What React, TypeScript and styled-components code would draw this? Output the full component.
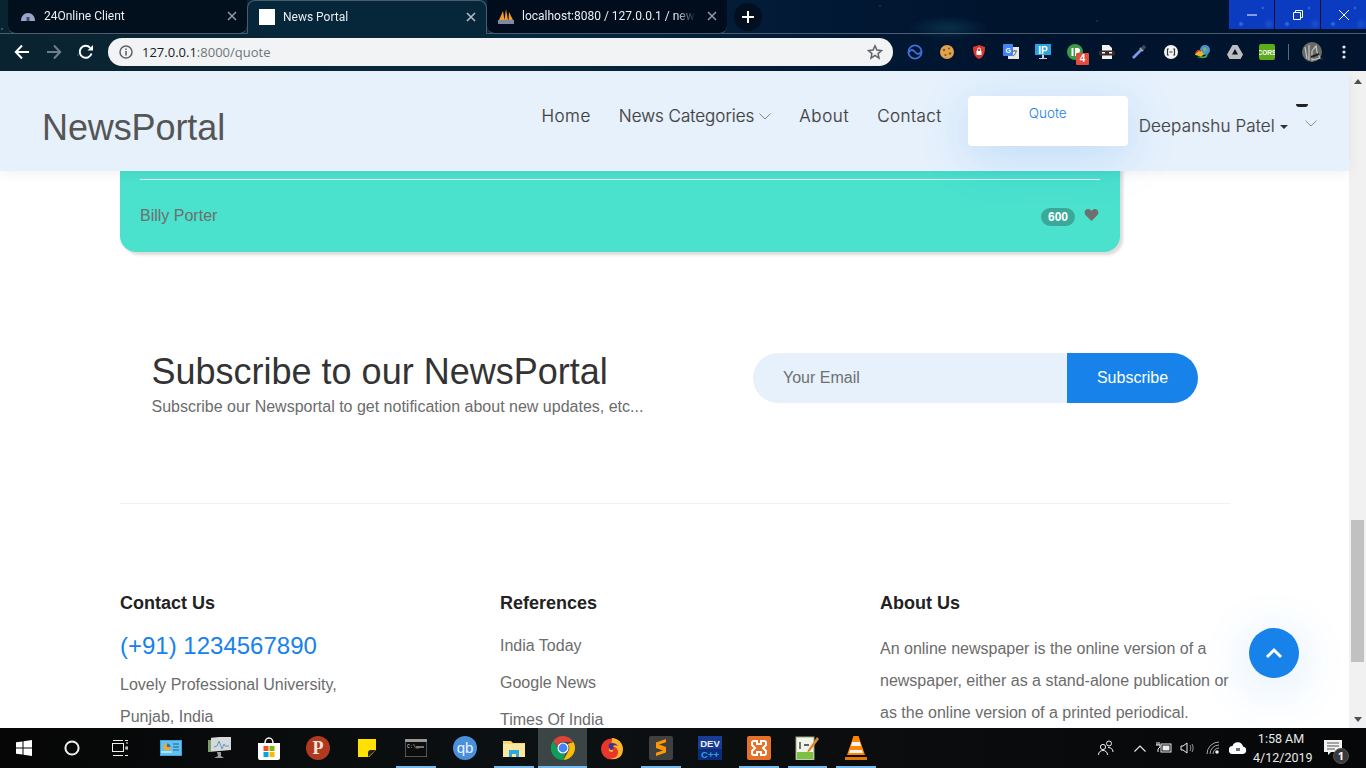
import React from "react";
import styled, { createGlobalStyle } from "styled-components";

const Global = createGlobalStyle`
  html, body { margin: 0; padding: 0; height: 100%; overflow: hidden; background: #fff; }
  * { box-sizing: border-box; }
`;

const Screen = styled.div`
  width: 1366px; height: 768px; display: flex; flex-direction: column; overflow: hidden;
  font-family: "Liberation Sans", Arial, sans-serif;
`;

/* ---------- browser chrome ---------- */
const Browser = styled.header`
  height: 71px; flex: none; display: flex; flex-direction: column; color: #fff;
  font-family: Roboto, "Noto Sans", sans-serif;
  background:
    radial-gradient(circle 1.5px at 78px 55px, #3b6a80 0, transparent 100%),
    radial-gradient(circle 1.5px at 2px 29px, #5b7f90 0, transparent 100%),
    radial-gradient(circle 1.5px at 1097px 21px, #1d3b5c 0, transparent 100%),
    radial-gradient(circle 1.5px at 1322px 59px, #1f3f60 0, transparent 100%),
    radial-gradient(circle 1.5px at 880px 6px, #203f5e 0, transparent 100%),
    radial-gradient(ellipse 40px 12px at 948px 28px, #0a3048 0, transparent 100%),
    radial-gradient(ellipse 260px 40px at 500px 50px, #05283e 0, transparent 100%),
    linear-gradient(90deg, #0a2330 0%, #08273a 35%, #021a36 58%, #00142e 72%, #00142e 100%);
`;
const TabStrip = styled.div`
  height: 34px; flex: none; display: flex; align-items: flex-start; padding-left: 8px;
  border-bottom: 1px solid #4a5d70;
`;
const Tab = styled.div<{ $active?: boolean }>`
  width: 239px; height: 34px; display: flex; align-items: center; gap: 8px; padding: 0 7px 1px 12px;
  font-size: 12px; position: relative;
  background: ${(p) => (p.$active ? "#06263a" : "#020f1d")};
  border-radius: ${(p) => (p.$active ? "8px 8px 0 0" : "0 0 8px 8px")};
  ${(p) =>
    p.$active
      ? "width: 240px; padding-left: 11px; border: 1px solid #4a5d70; border-bottom: 1px solid #06263a; z-index: 1;"
      : "border-bottom: 1px solid #4a5d70;"}
`;
const TabLast = styled(Tab)`
  width: 240px; background: #010c1c; border-left: 0; padding-left: 11px;
`;
const TabTitle = styled.span`
  flex: 1; min-width: 0; white-space: nowrap; overflow: hidden; color: #e9eef2;
  -webkit-mask-image: linear-gradient(90deg, #000 88%, transparent 100%);
  mask-image: linear-gradient(90deg, #000 88%, transparent 100%);
`;
const TabClose = styled.span`
  width: 16px; height: 16px; display: grid; place-items: center; flex: none; color: #8c98a3;
`;
const NewTab = styled.div`
  width: 28px; height: 28px; border-radius: 50%; background: #020f20; display: grid; place-items: center;
  margin: 3px 0 0 7px;
`;
const StripFill = styled.div`flex: 1;`;
const WinButtons = styled.div`
  display: flex; gap: 1px; height: 29px; margin-left: auto;
`;
const WinButton = styled.div`
  width: 45px; height: 29px; display: grid; place-items: center;
  background:
    radial-gradient(circle 3px at 12px 24px, #3f78e0 0, transparent 100%),
    radial-gradient(circle 2px at 34px 8px, #3a70de 0, transparent 100%),
    radial-gradient(circle 6px at 40px 24px, #1b52cc 0, transparent 100%),
    #0a3bc0;
`;
const Toolbar = styled.div`
  height: 37px; flex: none; display: flex; align-items: center; padding: 0 0 2px 6px;
`;
const NavIcon = styled.span`
  width: 32px; height: 28px; display: grid; place-items: center; flex: none;
`;
const AddressBar = styled.div`
  width: 785px; height: 28px; border-radius: 14px; background: #f1f3f4; margin-left: 6px;
  display: flex; align-items: center; padding: 0 10px 0 11px; gap: 9px;
  font-family: "Open Sans", sans-serif; font-size: 13px; color: #70757a;
`;
const Host = styled.span`color: #202124;`;
const Url = styled.span`flex: 1; white-space: nowrap;`;
const Extensions = styled.div`
  display: flex; align-items: center; margin-left: 6px;
`;
const Ext = styled.span`
  width: 32px; height: 28px; display: grid; place-items: center; flex: none; position: relative;
`;
const ExtBadge = styled.span`
  position: absolute; left: 17px; top: 15px; width: 13px; height: 12px; background: #e64a3c; color: #fff;
  font: bold 10px/12px "Liberation Sans", sans-serif; text-align: center; border-radius: 1px;
`;
const ExtSep = styled.span`
  width: 1px; height: 16px; background: #5c6b7a; margin: 0 7px 0 5px;
`;

/* ---------- page ---------- */
const Viewport = styled.div`
  position: relative; height: 657px; flex: none; display: flex; overflow: hidden; background: #fff;
`;
const Page = styled.main`
  width: 1349px; flex: none; overflow: hidden;
`;
const Scrollbar = styled.div`
  width: 17px; flex: none; background: #f1f1f1; display: flex; flex-direction: column; align-items: center;
`;
const ScrollArrowUp = styled.span`
  width: 0; height: 0; margin-top: 8px; border: 4px solid transparent; border-top: 0; border-bottom: 5px solid #505050;
`;
const ScrollThumb = styled.span`
  width: 13px; height: 142px; background: #c1c1c1; margin-top: 436px;
`;
const ScrollArrowDown = styled.span`
  width: 0; height: 0; margin-top: 55px; border: 4px solid transparent; border-bottom: 0; border-top: 5px solid #505050;
`;

const NavBar = styled.nav`
  position: absolute; left: 0; top: 0; width: 1349px; height: 100px; background: #e6f1fc; z-index: 2;
  box-shadow: 0 2px 12px rgba(0, 0, 0, 0.06);
  display: flex; align-items: flex-start; padding-left: 42px;
  font-family: Inter, "Liberation Sans", sans-serif; color: #515151;
`;
const Logo = styled.div`
  font: 36px/42px "Liberation Sans", sans-serif; color: #555; margin-top: 36px; letter-spacing: -0.1px;
`;
const NavLinks = styled.div`
  margin-left: auto; display: flex; align-items: flex-start;
`;
const NavLink = styled.a<{ $track?: number; $end?: number }>`
  font-size: 17px; line-height: 22px; font-weight: 300; margin: 34px ${(p) => p.$end ?? 28}px 0 0; display: flex; align-items: center; gap: 5px;
  color: #3f3f3f; white-space: nowrap; -webkit-text-stroke: 0.2px #3f3f3f;
  letter-spacing: ${(p) => p.$track ?? 0}px;
`;
const QuoteButton = styled.a`
  width: 160px; height: 50px; background: #fff; border-radius: 4px; margin-top: 25px;
  color: #1782ea; font-size: 13.5px; line-height: 34px; text-align: center; font-weight: 300;
  box-shadow: 0 10px 50px rgba(23, 130, 234, 0.2);
`;
const UserMenu = styled.div`
  margin: 44px 0 0 11px; font-size: 17px; line-height: 22px; color: #444; font-weight: 300; display: flex; align-items: center; gap: 5px;
  white-space: nowrap; -webkit-text-stroke: 0.2px #444; letter-spacing: 0.15px;
`;
const Caret = styled.span`
  width: 0; height: 0; border: 4px solid transparent; border-bottom: 0; border-top: 4px solid #333; margin-top: 2px;
`;
const UserExtra = styled.div`
  width: 59px; display: flex; flex-direction: column; align-items: flex-start; margin-top: 33px; margin-left: 2px; gap: 13px;
`;
const WideCaret = styled.span`
  width: 12px; height: 3px; background: #222; border-radius: 0 0 6px 6px; margin-left: 6px;
`;
const ExtraChevron = styled.span`
  display: flex; margin-left: 15px;
`;

const Card = styled.section`
  width: 1000px; height: 181px; margin-left: 120px; background: #4ae1cd; border-radius: 0 0 16px 16px;
  box-shadow: 3px 3px 3px rgba(0, 0, 0, 0.14); padding: 108px 20px 0;
`;
const CardFooter = styled.div`
  border-top: 1px solid #e8fbf8; display: flex; align-items: center; padding-top: 26px; line-height: 18px;
`;
const Author = styled.span`
  font-size: 16px; color: #6f6f6f; flex: 1;
`;
const Badge = styled.span`
  width: 34px; height: 18px; border-radius: 9px; background: #3aa999; color: #fff; text-align: center;
  font: bold 12px/18px "Liberation Sans", sans-serif; margin: 2px 9px 0 0;
`;
const Heart = styled.svg`
  margin: -3px 1px 0 0;
`;

const Subscribe = styled.section`
  display: flex; justify-content: space-between; align-items: flex-start; margin-top: 101px; padding: 0 151px 0 151.5px; height: 150px;
`;
const SubTitle = styled.h2`
  margin: 0; font-size: 36px; line-height: 38px; font-weight: 400; color: #333;
`;
const SubText = styled.p`
  margin: 7px 0 0; font-size: 16px; line-height: 18px; color: #6c6c6c;
`;
const SubForm = styled.div`
  width: 445px; height: 50px; display: flex; border-radius: 25px; overflow: hidden; font-size: 16px;
`;
const EmailBox = styled.div`
  flex: 1; background: #e6f1fc; color: #6f6f6f; line-height: 50px; padding-left: 30px;
`;
const SubButton = styled.div`
  width: 131px; background: #1782ea; color: #fff; line-height: 50px; text-align: center;
`;
const Rule = styled.hr`
  width: 1110px; margin: 0 0 0 120px; border: 0; border-top: 1px solid #eef1f3;
`;
const FooterGrid = styled.footer`
  display: grid; grid-template-columns: 380px 380px 350px; padding: 88px 0 0 120px;
`;
const FooterCol = styled.div``;
const FootTitle = styled.h4`
  margin: 0; font-size: 18px; line-height: 22px; font-weight: 700; color: #222;
`;
const Phone = styled.div`
  font-size: 24px; line-height: 30px; color: #1782ea; margin-top: 17px;
`;
const Addr = styled.div`
  font-size: 16px; line-height: 32px; color: #6c6c6c; margin-top: 8px;
`;
const Links = styled.div`
  margin-top: 23px; display: flex; flex-direction: column; gap: 19px;
  font-size: 16px; line-height: 18px; color: #6c6c6c;
`;
const About = styled.p`
  margin: 19px 0 0; font-size: 16px; line-height: 32px; color: #6c6c6c;
`;
const BackTop = styled.div`
  position: absolute; left: 1249px; top: 557px; width: 50px; height: 50px; border-radius: 50%; background: #1782ea;
  display: grid; place-items: center; z-index: 3; box-shadow: 0 8px 50px rgba(23, 130, 234, 0.2);
`;

/* ---------- taskbar ---------- */
const Taskbar = styled.footer`
  height: 40px; flex: none; background: linear-gradient(90deg, #060606, #0c1113 40%, #0b0d0e 60%, #060708); display: flex; align-items: stretch; color: #fff; z-index: 4;
`;
const Slot = styled.div<{ $run?: boolean; $hot?: boolean; $shift?: number }>`
  width: 48.95px; flex: none; display: grid; place-items: center; position: relative;
  padding-right: ${(p) => p.$shift ?? 0}px;
  background: ${(p) => (p.$hot ? "#3b4546" : "transparent")};
  &::after {
    content: ""; position: absolute; bottom: 0; left: ${(p) => (p.$hot ? "0" : "4.5px")}; right: ${(p) => (p.$hot ? "0" : "4.5px")}; height: 2px;
    background: ${(p) => (p.$run ? "#76b9ed" : "transparent")};
  }
`;
const Tray = styled.div`
  margin-left: auto; display: flex; align-items: center; padding-right: 18px;
`;
const TrayIcon = styled.span<{ $w?: number }>`
  width: ${(p) => p.$w ?? 24}px; display: grid; place-items: center; flex: none;
`;
const Clock = styled.div`
  width: 56px; text-align: center; font: 12.5px/19px Roboto, "Noto Sans", sans-serif; color: #e8e8e8; margin: 0 9px 0 3px; white-space: nowrap;
`;
const Notify = styled.span`
  position: relative; width: 30px; height: 30px; display: grid; place-items: center;
`;
const NotifyBadge = styled.span`
  position: absolute; left: 15px; top: 15px; width: 16px; height: 16px; border-radius: 50%; background: #3a3a3a; color: #fff;
  font: bold 11px/14px "Noto Sans", sans-serif; text-align: center; border: 1px solid #555;
`;

/* ---------- drawings ---------- */
const X = ({ c = "#8c98a3" }: { c?: string }) => (
  <svg width="10" height="10" viewBox="0 0 10 10"><path d="M1 1l8 8M9 1l-8 8" stroke={c} strokeWidth="1.6" /></svg>
);
const Chev = ({ c = "#666" }: { c?: string }) => (
  <svg width="12" height="7" viewBox="0 0 12 7"><path d="M.5.7L6 6l5.500-5.300" fill="none" stroke={c} strokeWidth=".8" /></svg>
);
const IconSet = {
  back: <svg width="16" height="16" viewBox="0 0 16 16"><path d="M15 8H2M8 1.500L1.800 8 8 14.500" fill="none" stroke="#fff" strokeWidth="2" /></svg>,
  fwd: <svg width="16" height="16" viewBox="0 0 16 16"><path d="M1 8h13M8 1.500L14.200 8 8 14.500" fill="none" stroke="#717f8a" strokeWidth="2" /></svg>,
  reload: <svg width="16" height="16" viewBox="0 0 16 16"><path d="M13.500 9.500A6 6 0 1 1 12.200 3.800" fill="none" stroke="#fff" strokeWidth="2" /><path d="M9.500 6.500H15V1z" fill="#fff" /></svg>,
  info: <svg width="14" height="14" viewBox="0 0 14 14"><circle cx="7" cy="7" r="6" fill="none" stroke="#5f6368" strokeWidth="1.500" /><path d="M7 6v4.400M7 3.400v1.600" stroke="#5f6368" strokeWidth="1.600" /></svg>,
  star: <svg width="16" height="16" viewBox="0 0 16 16"><path d="M8 1.800l1.900 4.200 4.600.5-3.400 3.100.9 4.500L8 11.400l-4 2.700.9-4.500L1.500 6.500l4.600-.5z" fill="none" stroke="#5f6368" strokeWidth="1.500" /></svg>,
};

const Exts = [
  <svg width="16" height="16" viewBox="0 0 16 16"><circle cx="8" cy="8" r="6.600" fill="none" stroke="#3f6fd8" strokeWidth="1.800" /><path d="M1.500 8.500C4 5 6 5.500 8 8s4 3 6.500-.5" fill="none" stroke="#3f6fd8" strokeWidth="1.800" /></svg>,
  <svg width="16" height="16" viewBox="0 0 16 16"><circle cx="8" cy="8" r="7" fill="#e2a24e" /><circle cx="5" cy="6" r="1.200" fill="#8a5420" /><circle cx="10" cy="4.600" r="1" fill="#8a5420" /><circle cx="11" cy="9.500" r="1.200" fill="#8a5420" /><circle cx="6.500" cy="11" r="1.100" fill="#8a5420" /></svg>,
  <svg width="16" height="16" viewBox="0 0 16 16"><path d="M8 1l6 2c0 6-1.500 10-6 12C3.500 13 2 9 2 3z" fill="#d9382e" /><rect x="5.500" y="7" width="5" height="4" fill="#fff" /><path d="M6.500 7V5.500a1.500 1.500 0 0 1 3 0V7" fill="none" stroke="#fff" /></svg>,
  <svg width="16" height="16" viewBox="0 0 16 16"><rect x="5" y="3" width="11" height="12" fill="#e8e8e8" /><rect width="10" height="12" rx="1" fill="#4285f4" /><text x="2.500" y="8.500" fontSize="7" fontWeight="700" fill="#fff" fontFamily="Liberation Sans">G</text><path d="M9 7h5M11.500 6v1M10 12c2-1 3-3 3-5" stroke="#666" fill="none" /></svg>,
  <svg width="18" height="18" viewBox="0 0 18 18"><rect x="1" y="1" width="16" height="11" fill="#29a3e6" /><text x="9" y="10.500" fontSize="10" fontWeight="700" fill="#fff" textAnchor="middle" fontFamily="Liberation Sans">IP</text><path d="M8 12h2v3h3v1H5v-1h3z" fill="#cfd6da" /></svg>,
  <svg width="16" height="16" viewBox="0 0 16 16"><circle cx="8" cy="8" r="8" fill="#3d9a46" /><rect x="4.500" y="4" width="2" height="8" fill="#fff" /><path d="M8 4h2.500a2.500 2.500 0 0 1 0 5H9.500v3H8z" fill="#fff" /></svg>,
  <svg width="16" height="16" viewBox="0 0 16 16"><path d="M3 1h7l3 3v3H3zM3 11h10v4H3z" fill="#f2f2f2" /><rect y="6.500" width="16" height="5" rx="1.500" fill="#3a2a28" /><rect x="3" y="8" width="3" height="1.500" fill="#fff" /><rect x="10" y="8" width="3" height="1.500" fill="#fff" /></svg>,
  <svg width="16" height="16" viewBox="0 0 16 16"><path d="M2 14l8-8" stroke="#7b9be8" strokeWidth="2.600" /><path d="M9 4l3 3" stroke="#aab" strokeWidth="2" /><path d="M11 5l3-3" stroke="#3d4a55" strokeWidth="3.500" /></svg>,
  <svg width="16" height="16" viewBox="0 0 16 16"><circle cx="8" cy="8" r="7" fill="#f4f4f4" /><path d="M5.800 5H4.500v6h1.300M10.200 5h1.300v6h-1.300M6.500 8h3" fill="none" stroke="#333" strokeWidth="1.200" /></svg>,
  <svg width="18" height="16" viewBox="0 0 18 16"><circle cx="11" cy="6" r="5" fill="#4f8fd0" /><path d="M9 4c2-1 3 0 4 2l-3 2z" fill="#6fbf4a" /><path d="M1 11C2 6 6 5 8 8l2 2-3 3c-2-1-4-2-6-2z" fill="#e9b820" /><path d="M3 13c3-1 6 0 8-1l3-3-1 4c-3 2-7 1-10 0z" fill="#3fae4a" /><path d="M2 9c1-2 3-3 5-2" stroke="#d33" fill="none" strokeWidth="1.500" /></svg>,
  <svg width="16" height="14" viewBox="0 0 16 14"><path d="M5.500 0h5L16 9.500 13.500 14h-11L0 9.500z" fill="#bdbdbd" /><path d="M8 4L5 9.500h6z" fill="#00142e" /></svg>,
  <svg width="16" height="16" viewBox="0 0 16 16"><rect width="16" height="16" rx="2" fill="#5cab1a" /><text x="8" y="10.500" fontSize="6.500" fontWeight="700" fill="#fff" textAnchor="middle" fontFamily="Liberation Sans Narrow, Liberation Sans">CORS</text></svg>,
];

const Avatar = (
  <svg width="20" height="20" viewBox="0 0 20 20"><circle cx="10" cy="10" r="10" fill="#6a6a68" /><path d="M3 5l2 12M7 3v15M10 9l4-5 1 6 3 6-8 2z" stroke="#c8c8c4" fill="none" strokeWidth="1.200" /><path d="M9 15l8-3" stroke="#222" strokeWidth="2" /></svg>
);
const Dots = (
  <svg width="4" height="14" viewBox="0 0 4 14"><circle cx="2" cy="2" r="1.600" fill="#e8e8e8" /><circle cx="2" cy="7" r="1.600" fill="#e8e8e8" /><circle cx="2" cy="12" r="1.600" fill="#e8e8e8" /></svg>
);

const Bar = [
  { shift: 0, run: false, hot: false, el: <svg width="16" height="16" viewBox="0 0 16 16"><path d="M0 2.300L6.500 1.400V7.500H0zM7.500 1.300L16 0v7.500H7.500zM0 8.500h6.500v6.100L0 13.700zM7.500 8.500H16V16l-8.500-1.300z" fill="#fff" /></svg> },
  { shift: 2, run: false, hot: false, el: <svg width="16" height="16" viewBox="0 0 16 16"><circle cx="8" cy="8" r="6.600" fill="none" stroke="#f0f0f0" strokeWidth="2" /></svg> },
  { shift: 4, run: false, hot: false, el: <svg width="16" height="16" viewBox="0 0 16 16"><path d="M1 .5h10M1 15.500h10" stroke="#eee" /><rect x=".5" y="3.500" width="11" height="8" fill="none" stroke="#eee" /><path d="M13 .5h3M14 3h2M14 7h2v2h-2zM13 15.500h3" stroke="#eee" strokeWidth="1.200" /></svg> },
  { shift: 0, run: false, hot: false, el: <svg width="22" height="16" viewBox="0 0 22 16"><rect width="22" height="16" fill="#35a7e0" /><rect x="1" y="1" width="20" height="14" fill="#66c1ec" /><circle cx="7" cy="7" r="3.500" fill="#f4a62a" /><path d="M7 7V3.500A3.500 3.500 0 0 1 10.500 7z" fill="#2b72c2" /><path d="M13 4h6M13 7h6M13 10h6" stroke="#1b5fa8" /><path d="M1 12h11" stroke="#fff" /></svg> },
  { shift: 0, run: false, hot: false, el: <svg width="24" height="22" viewBox="0 0 24 22"><rect x="3" y="1" width="20" height="14" fill="#d7d9d8" transform="skewY(-5)" /><path d="M6 10l3-1 2-5 3 8 2-5 1 2h4" fill="none" stroke="#5b9bd4" /><path d="M9 15l1 4-4 2h10l-3-2v-4z" fill="#9a9c9b" /><rect x="0" y="3" width="3" height="12" fill="#7e9c6a" /></svg> },
  { shift: 0, run: false, hot: false, el: <svg width="24" height="24" viewBox="0 0 24 24"><path d="M8 7a4 5 0 0 1 8 0" fill="none" stroke="#fff" strokeWidth="1.500" /><path d="M1 7h22v15a2 2 0 0 1-2 2H3a2 2 0 0 1-2-2z" fill="#fff" /><rect x="6.500" y="10" width="5" height="5" fill="#f25022" /><rect x="12.500" y="10" width="5" height="5" fill="#7fba00" /><rect x="6.500" y="16" width="5" height="5" fill="#00a4ef" /><rect x="12.500" y="16" width="5" height="5" fill="#ffb900" /></svg> },
  { shift: 0, run: false, hot: false, el: <svg width="24" height="24" viewBox="0 0 24 24"><circle cx="12" cy="12" r="12" fill="#b0391f" /><text x="12" y="18" fontSize="18" fontWeight="700" fill="#f5e6da" textAnchor="middle" fontFamily="Liberation Serif">P</text></svg> },
  { shift: 0, run: false, hot: false, el: <svg width="18" height="18" viewBox="0 0 18 18"><path d="M0 0h18v11l-7 7H0z" fill="#ffe000" /><path d="M10 18v-4a3 3 0 0 1 3-3h5z" fill="#222" /></svg> },
  { shift: 0, run: true, hot: false, el: <svg width="22" height="18" viewBox="0 0 22 18"><rect width="22" height="18" fill="#0c0c0c" stroke="#9a9a9a" /><rect width="22" height="3" fill="#9a9a9a" /><text x="2" y="9" fontSize="5" fill="#ddd" fontFamily="Liberation Mono">C:\_</text><path d="M11 8h8" stroke="#ddd" /></svg> },
  { shift: 0, run: false, hot: false, el: <svg width="24" height="24" viewBox="0 0 24 24"><circle cx="12" cy="12" r="12" fill="#4a8fdc" /><text x="12" y="17" fontSize="15" fill="#eaf3ff" textAnchor="middle" fontFamily="Liberation Sans">qb</text></svg> },
  { shift: 0, run: true, hot: false, el: <svg width="22" height="18" viewBox="0 0 22 18"><path d="M0 2h8l2 2h12v14H0z" fill="#f7d774" /><rect y="5" width="22" height="13" fill="#fbe79f" /><path d="M6 11h10v7h-3v-3H9v3H6z" fill="#2ea6df" /></svg> },
  { shift: 0, run: true, hot: true, el: <svg width="24" height="24" viewBox="0 0 24 24"><path d="M12 0a12 12 0 0 1 10.400 6H12a6 6 0 0 0-5.800 4.500L2.300 4.800A12 12 0 0 1 12 0z" fill="#db4437" /><path d="M22.400 6A12 12 0 0 1 12.500 24l4.700-8.500A6 6 0 0 0 16.500 8z" fill="#fbbc05" /><path d="M12.500 24A12 12 0 0 1 2.300 4.800l5 8.600A6 6 0 0 0 14.500 17.500z" fill="#0f9d58" /><circle cx="12" cy="12" r="5" fill="#4285f4" stroke="#fff" strokeWidth="1.200" /></svg> },
  { shift: 0, run: false, hot: false, el: <svg width="24" height="24" viewBox="0 0 24 24"><circle cx="11.500" cy="13" r="10.500" fill="#e8362a" /><path d="M12 2c6 0 11 5 11 11 0 3-1 6-3 8-3 2-7 3-10 1 5 1 8-2 8-6 0-3-3-6-6-5 1 2 2 4 0 5-2 0-4-1-3-3 1-3 3-4 3-11z" fill="#fdb22b" /><path d="M9 8c3-2 7-1 9 2-2-1-4-1-5 0 1 1 1 3-1 4-2 0-4-2-3-6z" fill="#46308f" /></svg> },
  { shift: 0, run: true, hot: false, el: <svg width="24" height="24" viewBox="0 0 24 24"><rect width="24" height="24" rx="2" fill="#404040" /><path d="M17 3L7 6.500v5.500l7 2.500-7 2.300V20l10-3.500v-5.500L10 8.500l7-2.300z" fill="#ff9800" /></svg> },
  { shift: 0, run: false, hot: false, el: <svg width="24" height="24" viewBox="0 0 24 24"><rect width="24" height="24" fill="#173d97" /><text x="12" y="11" fontSize="9.500" fontWeight="700" fill="#f0f0f0" textAnchor="middle" fontFamily="Liberation Sans">DEV</text><rect y="13" width="24" height="11" fill="#0b2c78" /><text x="12" y="22" fontSize="9.500" fontWeight="700" fill="#2ea0ea" textAnchor="middle" fontFamily="Liberation Sans">C++</text></svg> },
  { shift: 0, run: true, hot: false, el: <svg width="24" height="24" viewBox="0 0 24 24"><rect width="24" height="24" rx="2" fill="#e4702a" /><path d="M7 5h3v3h4V5h3a2 2 0 0 1 2 2v2l-3 3 3 3v2a2 2 0 0 1-2 2h-3v-3h-4v3H7a2 2 0 0 1-2-2v-2l3-3-3-3V7a2 2 0 0 1 2-2z" fill="none" stroke="#fff" strokeWidth="2" /></svg> },
  { shift: 0, run: true, hot: false, el: <svg width="24" height="24" viewBox="0 0 24 24"><rect x="1" y="1" width="18" height="23" fill="#f1f4e8" stroke="#9aa07f" /><rect x="2" y="16" width="16" height="7" fill="#7cc242" /><path d="M5 6v7M9 9h5" stroke="#333" strokeWidth="1.300" /><path d="M22 1L13 14l-1 3 3-2 9-12z" fill="#d8892b" /></svg> },
  { shift: 0, run: true, hot: false, el: <svg width="22" height="24" viewBox="0 0 22 24"><path d="M8.500 0h5L20 19H2z" fill="#ff8800" /><path d="M7.300 6h7.400l1.300 4H6zM5 14h12l1 3H4z" fill="#f3f3f3" /><path d="M0 21h22v3H0z" fill="#e27a00" /></svg> },
];

export default function App() {
  return (
    <Screen>
      <Global />
      <Browser>
        <TabStrip>
          <Tab>
            <svg width="16" height="16" viewBox="0 0 16 16"><path d="M1 13C1 8 4 5 8 5s7 3 7 8z" fill="#9aa5c9" /><path d="M6.500 9h3v4h-3z" fill="#3c4a70" /></svg>
            <TabTitle>24Online Client</TabTitle>
            <TabClose><X /></TabClose>
          </Tab>
          <Tab $active>
            <svg width="16" height="16" viewBox="0 0 16 16"><rect width="16" height="16" fill="#fff" /></svg>
            <TabTitle>News Portal</TabTitle>
            <TabClose><X c="#b4bcc4" /></TabClose>
          </Tab>
          <TabLast>
            <svg width="16" height="16" viewBox="0 0 16 16"><path d="M1 12L5 3l1.500 9zM6.500 12L8 1l2 11zM10.500 12L11 4l4 8z" fill="#f29b25" /><rect x="0" y="12" width="16" height="4" fill="#7c8aa8" /></svg>
            <TabTitle>localhost:8080 / 127.0.0.1 / newsportal</TabTitle>
            <TabClose><X /></TabClose>
          </TabLast>
          <NewTab>
            <svg width="12" height="12" viewBox="0 0 12 12"><path d="M6 0v12M0 6h12" stroke="#fff" strokeWidth="2" /></svg>
          </NewTab>
          <StripFill />
          <WinButtons>
            <WinButton><svg width="10" height="10" viewBox="0 0 10 10"><path d="M0 5h10" stroke="#fff" /></svg></WinButton>
            <WinButton><svg width="10" height="10" viewBox="0 0 10 10"><path d="M.5 2.500h7v7h-7zM2.500 2.500v-2h7v7h-2" fill="none" stroke="#fff" /></svg></WinButton>
            <WinButton><svg width="10" height="10" viewBox="0 0 10 10"><path d="M0 0l10 10M10 0L0 10" stroke="#fff" /></svg></WinButton>
          </WinButtons>
        </TabStrip>
        <Toolbar>
          <NavIcon>{IconSet.back}</NavIcon>
          <NavIcon>{IconSet.fwd}</NavIcon>
          <NavIcon>{IconSet.reload}</NavIcon>
          <AddressBar>
            {IconSet.info}
            <Url><Host>127.0.0.1</Host>:8000/quote</Url>
            {IconSet.star}
          </AddressBar>
          <Extensions>
            {Exts.map((e, i) => (
              <Ext key={i}>{e}{i === 5 && <ExtBadge>4</ExtBadge>}</Ext>
            ))}
            <ExtSep />
            <Ext>{Avatar}</Ext>
            <Ext>{Dots}</Ext>
          </Extensions>
        </Toolbar>
      </Browser>

      <Viewport>
        <Page>
          <Card>
            <CardFooter>
              <Author>Billy Porter</Author>
              <Badge>600</Badge>
              <Heart width="15" height="13" viewBox="0 0 16 14"><path d="M8 14L1.500 7.500C-1.500 3.500 3.500-2 8 3c4.500-5 9.500.5 6.500 4.500z" fill="#6f6f6f" /></Heart>
            </CardFooter>
          </Card>
          <Subscribe>
            <div>
              <SubTitle>Subscribe to our NewsPortal</SubTitle>
              <SubText>Subscribe our Newsportal to get notification about new updates, etc...</SubText>
            </div>
            <SubForm>
              <EmailBox>Your Email</EmailBox>
              <SubButton>Subscribe</SubButton>
            </SubForm>
          </Subscribe>
          <Rule />
          <FooterGrid>
            <FooterCol>
              <FootTitle>Contact Us</FootTitle>
              <Phone>(+91) 1234567890</Phone>
              <Addr>Lovely Professional University,<br />Punjab, India</Addr>
            </FooterCol>
            <FooterCol>
              <FootTitle>References</FootTitle>
              <Links>
                <span>India Today</span>
                <span>Google News</span>
                <span>Times Of India</span>
              </Links>
            </FooterCol>
            <FooterCol>
              <FootTitle>About Us</FootTitle>
              <About>An online newspaper is the online version of a newspaper, either as a stand-alone publication or as the online version of a printed periodical.</About>
            </FooterCol>
          </FooterGrid>
        </Page>
        <Scrollbar>
          <ScrollArrowUp />
          <ScrollThumb />
          <ScrollArrowDown />
        </Scrollbar>
        <NavBar>
          <Logo>NewsPortal</Logo>
          <NavLinks>
            <NavLink $track={0.5}>Home</NavLink>
            <NavLink>News Categories <Chev /></NavLink>
            <NavLink $track={0.6}>About</NavLink>
            <NavLink $track={0.43} $end={26}>Contact</NavLink>
            <QuoteButton>Quote</QuoteButton>
            <UserMenu>Deepanshu Patel <Caret /></UserMenu>
            <UserExtra><WideCaret /><ExtraChevron><Chev c="#777" /></ExtraChevron></UserExtra>
          </NavLinks>
        </NavBar>
        <BackTop>
          <svg width="18" height="12" viewBox="0 0 18 12"><path d="M2 10l7-7 7 7" fill="none" stroke="#fff" strokeWidth="3" /></svg>
        </BackTop>
      </Viewport>

      <Taskbar>
        {Bar.map((b, i) => (
          <Slot key={i} $run={b.run} $hot={b.hot} $shift={b.shift}>{b.el}</Slot>
        ))}
        <Tray>
          <TrayIcon $w={44}><svg width="16" height="16" viewBox="0 0 16 16"><circle cx="5" cy="7" r="2.600" fill="none" stroke="#eee" /><path d="M.5 15c0-3 2-4.500 4.500-4.500s4.500 1.500 4.500 4.500" fill="none" stroke="#eee" /><circle cx="11" cy="3.500" r="2.500" fill="none" stroke="#eee" /><path d="M10 7.500c3 0 5 1.500 5 4.500" fill="none" stroke="#eee" /></svg></TrayIcon>
          <TrayIcon><svg width="12" height="7" viewBox="0 0 12 7"><path d="M.5 6.500L6 1l5.500 5.500" fill="none" stroke="#eee" strokeWidth="1.100" /></svg></TrayIcon>
          <TrayIcon><svg width="16" height="12" viewBox="0 0 16 12"><rect x="5" y="2" width="10" height="8" fill="none" stroke="#eee" /><rect x="6.500" y="3.500" width="7" height="5" fill="#eee" /><path d="M1 0v3M3 0v3M0 3h4v2l-2 2v3" stroke="#eee" fill="none" /></svg></TrayIcon>
          <TrayIcon><svg width="16" height="14" viewBox="0 0 16 14"><path d="M1 5h2l4-3v10L3 9H1z" fill="none" stroke="#eee" /><path d="M10 4c1 2 1 4 0 6M12 3c1.500 2.500 1.500 5.500 0 8" fill="none" stroke="#999" /></svg></TrayIcon>
          <TrayIcon $w={26}><svg width="14" height="14" viewBox="0 0 14 14"><path d="M1 13A12 12 0 0 1 13 1M4 13a9 9 0 0 1 9-9M7 13a6 6 0 0 1 6-6" fill="none" stroke="#aaa" /><circle cx="11" cy="11" r="1.800" fill="#eee" /></svg></TrayIcon>
          <TrayIcon><svg width="18" height="12" viewBox="0 0 18 12"><path d="M4 12a4 4 0 0 1-.5-8A5.500 5.500 0 0 1 14 4.500 3.800 3.800 0 0 1 14 12z" fill="#fff" /><path d="M8 6v3M10 6v3" stroke="#111" strokeWidth="1.200" /></svg></TrayIcon>
          <Clock>1:58 AM<br />4/12/2019</Clock>
          <Notify>
            <svg width="18" height="16" viewBox="0 0 18 16"><path d="M0 0h18v12H7l-3 3v-3H0z" fill="#f2f2f2" /><path d="M3 3h12M3 6h12M3 9h8" stroke="#555" /></svg>
            <NotifyBadge>1</NotifyBadge>
          </Notify>
        </Tray>
      </Taskbar>
    </Screen>
  );
}
